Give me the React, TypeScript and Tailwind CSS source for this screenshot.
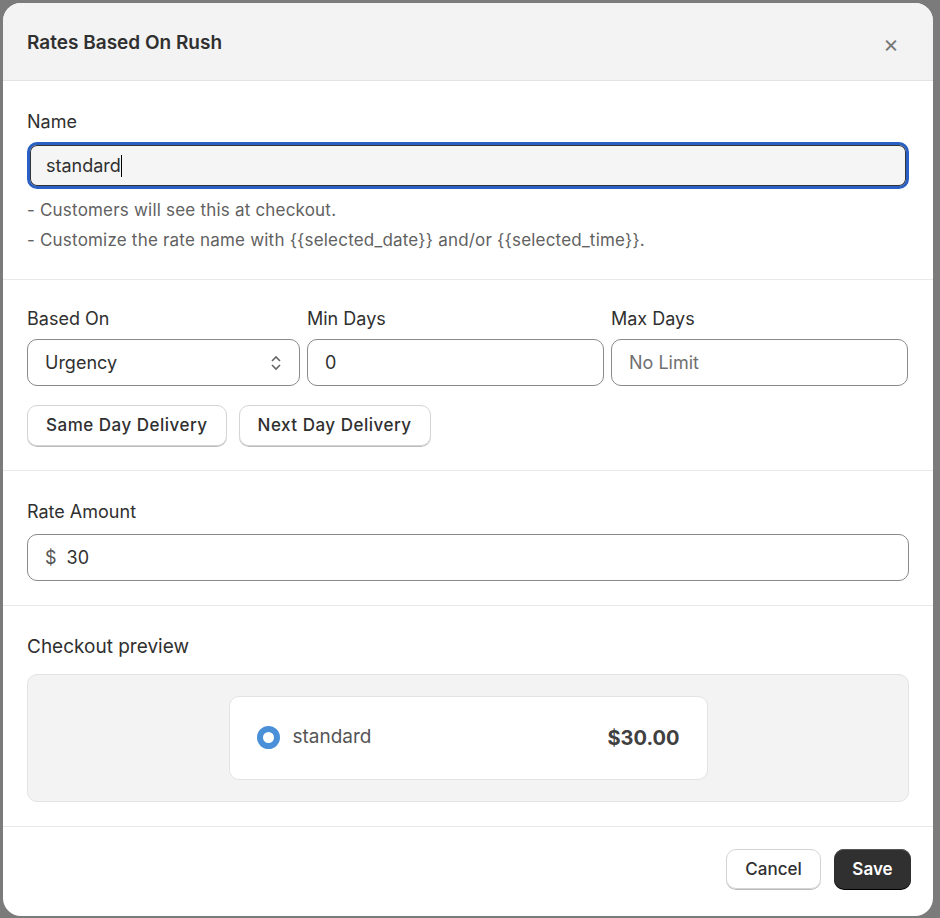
export default function App() {
  return (
    <div className="w-[940px] h-[918px] bg-[#7b7b7b] pl-[3px] pt-[3px]" style={{ fontFamily: "Inter, 'Liberation Sans', sans-serif" }}>
      <div className="w-[930px] h-[913px] bg-white rounded-[18px] overflow-hidden flex flex-col text-[#303030]">
        <div className="h-[78px] bg-[#f3f3f3] border-b border-[#e3e3e3] flex items-center justify-between px-[24px] pt-[4px] shrink-0">
          <div className="text-[19px] font-semibold">Rates Based On Rush</div>
          <div className="text-[24px] text-[#777] mr-[10px] leading-none">×</div>
        </div>
        <div className="px-[24px] pt-[27px] pb-[24px] border-b border-[#e9e9e9]">
          <div className="text-[18px] mb-[7px]">Name</div>
          <div className="h-[47px] rounded-[10px] border-[3px] border-[#2a5fc4] bg-[#f5f5f5] flex items-center px-[16px] text-[18px] shadow-[inset_0_0_0_1px_#333]">standard<span className="inline-block w-[1.5px] h-[22px] bg-black" /></div>
          <div className="mt-[6px] text-[17px] text-[#616161] leading-[30px] tracking-[0.2px]">
            <div>- Customers will see this at checkout.</div>
            <div>- Customize the rate name with {"{{selected_date}}"} and/or {"{{selected_time}}"}.</div>
          </div>
        </div>
        <div className="px-[24px] pt-[25px] pb-[24px] border-b border-[#e9e9e9]">
          <div className="grid grid-cols-[273px_297px_297px] gap-[7px]">
            <div>
              <div className="text-[18px] mb-[7px]">Based On</div>
              <div className="h-[47px] rounded-[10px] border border-[#8a8a8a] flex items-center justify-between px-[17px] text-[18px]">
                Urgency
                <svg width="12" height="20" viewBox="0 0 12 20" fill="none" stroke="#666" strokeWidth="1.6"><path d="M2 8l4-4 4 4M2 12l4 4 4-4" /></svg>
              </div>
            </div>
            <div>
              <div className="text-[18px] mb-[7px]">Min Days</div>
              <div className="h-[47px] rounded-[10px] border border-[#8a8a8a] flex items-center px-[17px] text-[18px]">0</div>
            </div>
            <div>
              <div className="text-[18px] mb-[7px]">Max Days</div>
              <div className="h-[47px] rounded-[10px] border border-[#8a8a8a] flex items-center px-[17px] text-[18px] text-[#707070]">No Limit</div>
            </div>
          </div>
          <div className="flex gap-[12px] mt-[19px]">
            <div className="h-[41px] px-[18px] rounded-[10px] border border-[#d4d4d4] shadow-[0_1px_0_#bbb] flex items-center text-[17px] font-medium tracking-[0.5px]">Same Day Delivery</div>
            <div className="h-[41px] px-[18px] rounded-[10px] border border-[#d4d4d4] shadow-[0_1px_0_#bbb] flex items-center text-[17px] font-medium tracking-[0.5px]">Next Day Delivery</div>
          </div>
        </div>
        <div className="px-[24px] pt-[27px] pb-[24px] border-b border-[#e9e9e9]">
          <div className="text-[18px] mb-[9px]">Rate Amount</div>
          <div className="h-[47px] rounded-[10px] border border-[#8a8a8a] flex items-center px-[17px] text-[18px] gap-[10px]"><span className="text-[#555]">$</span>30</div>
        </div>
        <div className="px-[24px] pt-[27px] pb-[24px] border-b border-[#e9e9e9]">
          <div className="text-[19px] mb-[12px]">Checkout preview</div>
          <div className="h-[128px] rounded-[10px] border border-[#e3e3e3] bg-[#f3f3f3] flex items-center justify-center">
            <div className="w-[479px] h-[84px] bg-white rounded-[10px] border border-[#e3e3e3] flex items-center justify-between px-[27px]">
              <div className="flex items-center gap-[13px]">
                <div className="w-[23px] h-[23px] rounded-full border-[6px] border-[#4a90d9] bg-white" />
                <span className="text-[19px] text-[#555]">standard</span>
              </div>
              <span className="text-[20px] font-bold text-[#404040]">$30.00</span>
            </div>
          </div>
        </div>
        <div className="flex-1 flex items-center justify-end gap-[13px] px-[22px] pb-[4px]">
          <div className="h-[40px] w-[95px] justify-center rounded-[10px] border border-[#d4d4d4] shadow-[0_1px_0_#bbb] flex items-center text-[17px] font-medium">Cancel</div>
          <div className="h-[40px] w-[77px] justify-center rounded-[10px] bg-[#303030] text-white shadow-[0_1px_0_#000,inset_0_1px_0_#555] flex items-center text-[17px] font-semibold">Save</div>
        </div>
      </div>
    </div>
  );
}
